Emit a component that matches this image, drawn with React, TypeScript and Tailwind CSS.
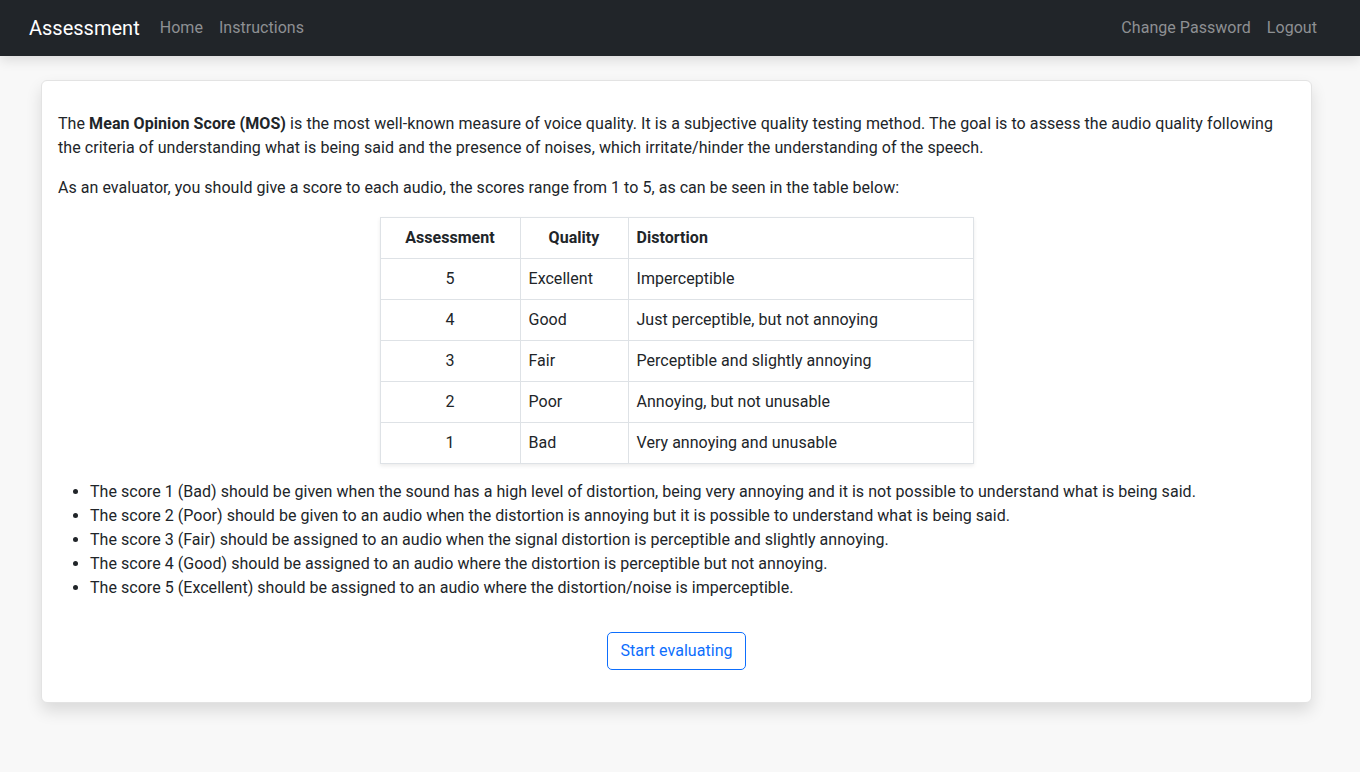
import React from "react";

const rows = [
  ["5", "Excellent", "Imperceptible"],
  ["4", "Good", "Just perceptible, but not annoying"],
  ["3", "Fair", "Perceptible and slightly annoying"],
  ["2", "Poor", "Annoying, but not unusable"],
  ["1", "Bad", "Very annoying and unusable"],
];

const items = [
  "The score 1 (Bad) should be given when the sound has a high level of distortion, being very annoying and it is not possible to understand what is being said.",
  "The score 2 (Poor) should be given to an audio when the distortion is annoying but it is possible to understand what is being said.",
  "The score 3 (Fair) should be assigned to an audio when the signal distortion is perceptible and slightly annoying.",
  "The score 4 (Good) should be assigned to an audio where the distortion is perceptible but not annoying.",
  "The score 5 (Excellent) should be assigned to an audio where the distortion/noise is imperceptible.",
];

export default function App() {
  return (
    <div
      className="min-h-[772px] bg-[#f8f8f8] text-[#212529] text-[16px] leading-6 tracking-[0.04px]"
      style={{ fontFamily: "Roboto, 'Noto Sans', sans-serif" }}
    >
      <nav className="relative z-10 h-14 bg-[#212529] flex items-center pl-[29px] pr-[35px] shadow-[0_4px_12px_rgba(0,0,0,0.12)]">
        <span className="text-white text-[20px] mr-3 tracking-normal">Assessment</span>
        <a className="px-2 text-[#8e9093]">Home</a>
        <a className="px-2 text-[#8e9093]">Instructions</a>
        <div className="flex-1" />
        <a className="px-2 text-[#8e9093]">Change Password</a>
        <a className="px-2 text-[#8e9093]">Logout</a>
      </nav>
      <div className="ml-[41px] mr-[48px] pt-6">
        <div className="bg-white border border-[#e3e3e3] rounded-[6px] shadow-[0_8px_16px_rgba(0,0,0,0.12)] px-4 pt-[31px] pb-4">
          <p className="mb-4 tracking-[0.07px]">
            The <b className="font-bold">Mean Opinion Score (MOS)</b> is the most well-known measure of voice quality. It is a subjective quality testing method. The goal is to assess the audio quality following the criteria of understanding what is being said and the presence of noises, which irritate/hinder the understanding of the speech.
          </p>
          <p className="mb-[17px]">
            As an evaluator, you should give a score to each audio, the scores range from 1 to 5, as can be seen in the table below:
          </p>
          <div className="flex justify-center">
            <table className="border-collapse border border-[#dee2e6] shadow-[0_2px_4px_rgba(0,0,0,0.08)] w-[594px]">
              <thead>
                <tr className="h-[41px]">
                  <th className="border border-[#dee2e6] px-2 w-[140px] text-center font-bold">Assessment</th>
                  <th className="border border-[#dee2e6] px-2 w-[108px] text-center font-bold">Quality</th>
                  <th className="border border-[#dee2e6] px-2 text-left font-bold">Distortion</th>
                </tr>
              </thead>
              <tbody>
                {rows.map((r) => (
                  <tr key={r[0]} className="h-[41px]">
                    <td className="border border-[#dee2e6] px-2 text-center">{r[0]}</td>
                    <td className="border border-[#dee2e6] px-2">{r[1]}</td>
                    <td className="border border-[#dee2e6] px-2">{r[2]}</td>
                  </tr>
                ))}
              </tbody>
            </table>
          </div>
          <ul className="list-disc pl-8 mt-4 mb-4">
            {items.map((t) => (
              <li key={t}>{t}</li>
            ))}
          </ul>
          <div className="flex justify-center pt-4 pb-4">
            <button className="h-[38px] px-3 border border-[#0d6efd] text-[#0d6efd] rounded-[5px] bg-white">
              Start evaluating
            </button>
          </div>
        </div>
      </div>
    </div>
  );
}
